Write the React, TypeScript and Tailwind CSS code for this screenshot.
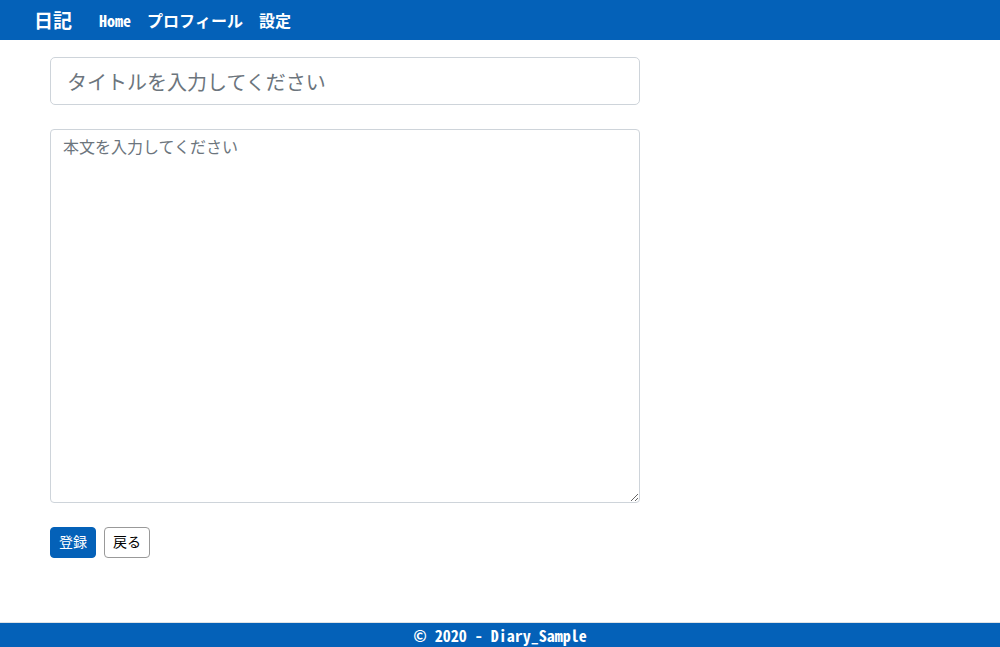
export default function App() {
  const nav = "font-['Noto_Sans_Mono_CJK_JP','Noto_Sans_CJK_JP','DejaVu_Sans_Mono',monospace]";
  const body = "font-['Noto_Sans_CJK_JP','Noto_Sans',sans-serif]";

  return (
    <div className={`min-h-[647px] flex flex-col bg-white ${body}`}>
      {/* Navbar */}
      <header className={`h-10 bg-[#0461b8] flex items-center pl-[34px] text-white ${nav}`}>
        <span className="text-[19px] font-bold mr-[27px]">日記</span>
        <nav className="flex items-center gap-4 text-base font-bold">
          <a href="#">Home</a>
          <a href="#">プロフィール</a>
          <a href="#">設定</a>
        </nav>
      </header>

      {/* Form */}
      <main className="flex-1 px-[50px] pt-[17px]">
        <div className="w-[590px] flex flex-col">
          <input
            type="text"
            placeholder="タイトルを入力してください"
            className="h-12 border border-[#ced4da] rounded-[5px] px-4 text-xl placeholder-[#6c757d] outline-none"
          />
          <textarea
            placeholder="本文を入力してください"
            className="mt-6 h-[374px] border border-[#ced4da] rounded-[4px] px-3 pt-[4px] pb-[7px] text-base placeholder-[#6c757d] outline-none"
          />
          <div className="flex gap-2 mt-6">
            <button className="h-[31px] px-2 pb-[3px] bg-[#0461b8] text-white text-sm rounded-[4px] border border-[#0461b8]">
              登録
            </button>
            <button className="h-[31px] px-2 pb-[3px] bg-white text-black text-sm rounded-[4px] border border-[#999]">
              戻る
            </button>
          </div>
        </div>
      </main>

      {/* Footer */}
      <footer className={`h-[25px] bg-[#0461b8] border-t border-[#dee2e6] flex items-center justify-center text-white text-base font-bold ${nav}`}>
        © 2020 - Diary_Sample
      </footer>
    </div>
  );
}
